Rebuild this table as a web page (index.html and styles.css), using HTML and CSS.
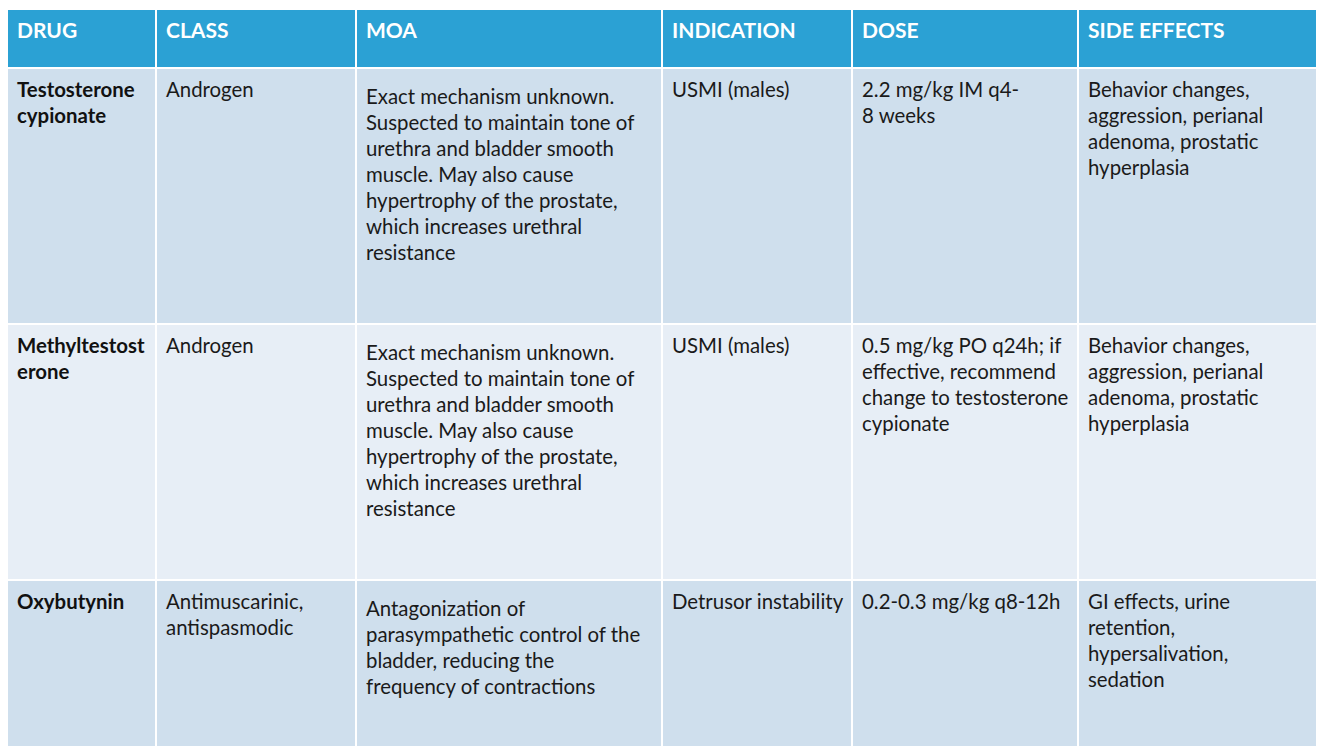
FILE: index.html
```html
<!DOCTYPE html>
<html>
<head>
<meta charset="utf-8">
<link rel="stylesheet" href="styles.css">
</head>
<body>
<table class="drugs">
  <colgroup>
    <col class="c1"><col class="c2"><col class="c3"><col class="c4"><col class="c5"><col class="c6">
  </colgroup>
  <thead>
    <tr class="head">
      <th>DRUG</th><th>CLASS</th><th>MOA</th><th>INDICATION</th><th>DOSE</th><th>SIDE EFFECTS</th>
    </tr>
  </thead>
  <tbody>
    <tr class="r1 tall">
      <td class="name">Testosterone<br>cypionate</td>
      <td>Androgen</td>
      <td class="moa">Exact mechanism unknown.<br>Suspected to maintain tone of<br>urethra and bladder smooth<br>muscle. May also cause<br>hypertrophy of the prostate,<br>which increases urethral<br>resistance</td>
      <td>USMI (males)</td>
      <td>2.2 mg/kg IM q4-<br>8 weeks</td>
      <td>Behavior changes,<br>aggression, perianal<br>adenoma, prostatic<br>hyperplasia</td>
    </tr>
    <tr class="r2 tall">
      <td class="name">Methyltestost<br>erone</td>
      <td>Androgen</td>
      <td class="moa">Exact mechanism unknown.<br>Suspected to maintain tone of<br>urethra and bladder smooth<br>muscle. May also cause<br>hypertrophy of the prostate,<br>which increases urethral<br>resistance</td>
      <td>USMI (males)</td>
      <td>0.5 mg/kg PO q24h; if<br>effective, recommend<br>change to testosterone<br>cypionate</td>
      <td>Behavior changes,<br>aggression, perianal<br>adenoma, prostatic<br>hyperplasia</td>
    </tr>
    <tr class="r1 short">
      <td class="name">Oxybutynin</td>
      <td>Antimuscarinic,<br>antispasmodic</td>
      <td class="moa">Antagonization of<br>parasympathetic control of the<br>bladder, reducing the<br>frequency of contractions</td>
      <td>Detrusor instability</td>
      <td>0.2-0.3 mg/kg q8-12h</td>
      <td>GI effects, urine<br>retention,<br>hypersalivation,<br>sedation</td>
    </tr>
  </tbody>
</table>
</body>
</html>
```

FILE: styles.css
```css
html, body {
  margin: 0;
  padding: 0;
  background: #ffffff;
}
body {
  padding: 10px 8px 0 8px;
  font-family: Lato, "Open Sans", "Liberation Sans", sans-serif;
}
.drugs {
  width: 1308px;
  table-layout: fixed;
  border-collapse: collapse;
  border-style: hidden;
}
.c1 { width: 148px; }
.c2 { width: 200px; }
.c3 { width: 306px; }
.c4 { width: 190px; }
.c5 { width: 226px; }
.c6 { width: 238px; }
.drugs th,
.drugs td {
  border: 2px solid #ffffff;
  vertical-align: top;
  text-align: left;
  padding: 7px 6px 0 9px;
  font-size: 20.4px;
  line-height: 26px;
  color: #1a1a1a;
  box-sizing: border-box;
  white-space: nowrap;
}
.head {
  height: 58px;
  background: #2ba1d4;
}
.drugs th {
  color: #ffffff;
  font-weight: 700;
  font-size: 21px;
  padding-top: 7px;
}
.r1 { background: #cfdfed; }
.r2 { background: #e7eef6; }
.tall { height: 256px; }
.short { height: 166px; }
.drugs td.name {
  font-weight: 700;
  color: #111111;
}
.drugs td.moa {
  padding-top: 14px;
}
```
